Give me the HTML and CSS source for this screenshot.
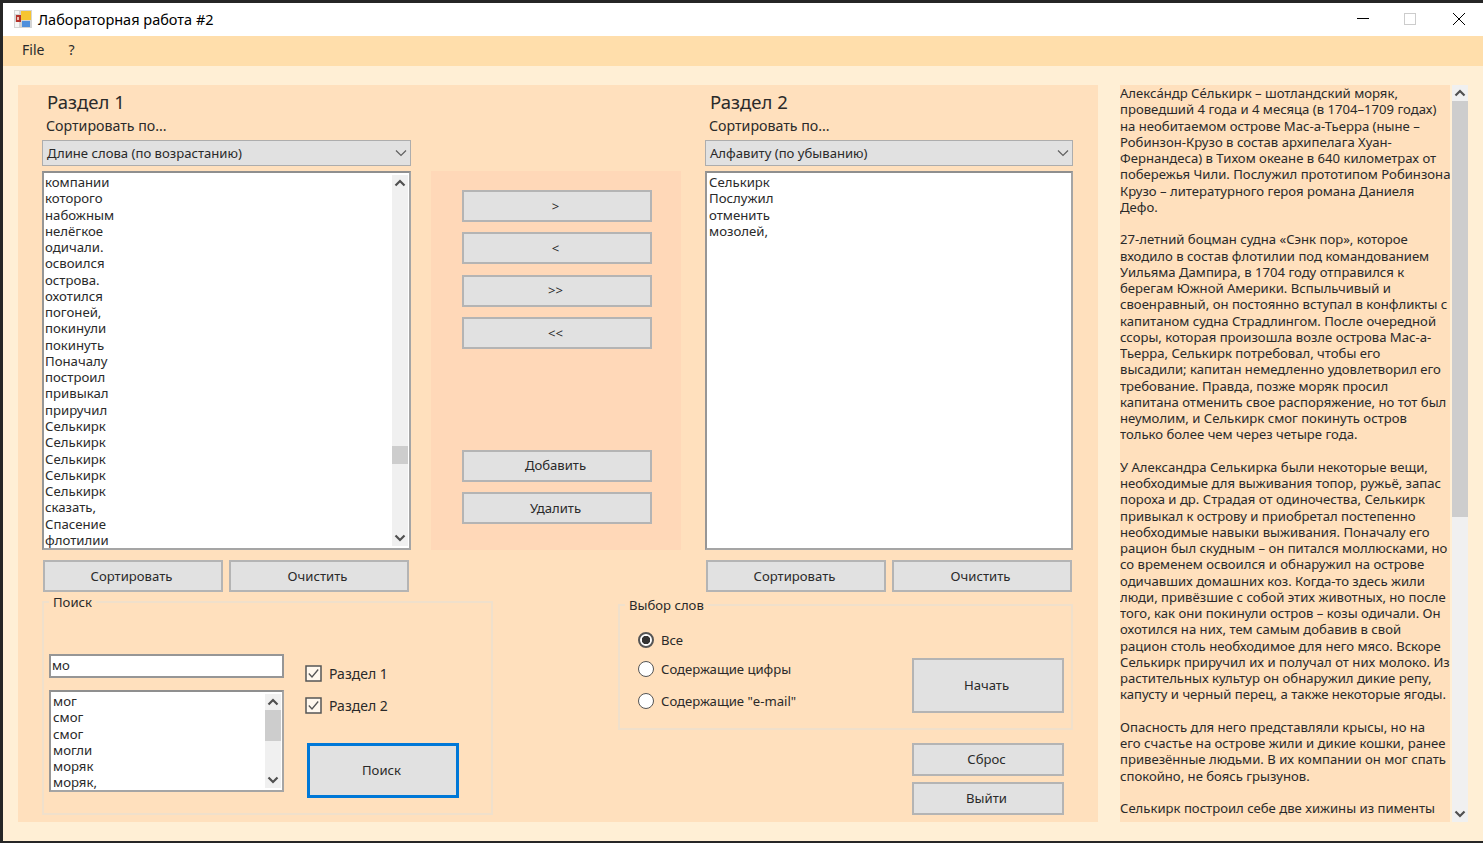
FILE: index.html
```html
<!DOCTYPE html>
<html lang="ru">
<head>
    <meta charset="UTF-8">
    <meta name="viewport" content="width=device-width, initial-scale=1.0">
    <title>Лабораторная работа #2</title>
    <link rel="stylesheet" href="styles.css">
</head>
<body>
    <svg class="sprites" width="0" height="0">
        <symbol id="chev-up" viewBox="0 0 12 8"><path d="M1.5 6.5 6 2l4.500 4.500" fill="none" stroke="#505050" stroke-width="2.200"/></symbol>
        <symbol id="chev-down" viewBox="0 0 12 8"><path d="M1.500 1.500 6 6l4.500-4.500" fill="none" stroke="#505050" stroke-width="2.200"/></symbol>
        <symbol id="combo-arrow" viewBox="0 0 12 8"><path d="M1 1.500 6 6.500l5-5" fill="none" stroke="#606060" stroke-width="1.200"/></symbol>
        <symbol id="check" viewBox="0 0 17 17"><rect x="1" y="1" width="15" height="15" fill="#fff8ee" stroke="#555" stroke-width="1.500"/><path d="M3.800 8.500 7 12l6.200-7.500" fill="none" stroke="#555" stroke-width="1.300"/></symbol>
    </svg>

    <div class="window">
        <div class="titlebar">
            <svg class="app-icon" width="18" height="18" viewBox="0 0 18 18">
                <rect width="18" height="18" fill="#d4d4d4"/>
                <rect x="1" y="12" width="4" height="5" fill="#f6f6f6"/>
                <rect x="1" y="1" width="4" height="3" fill="#f6f6f6"/>
                <rect x="2" y="5" width="5" height="7" fill="#b5332c"/>
                <rect x="3" y="7" width="2" height="3" fill="#ecc2b5"/>
                <rect x="7" y="1" width="10" height="9" fill="#f6c531"/>
                <rect x="8" y="11" width="8" height="6" fill="#4f8fdc"/>
            </svg>
            <span class="title-text">Лабораторная работа #2</span>
            <div class="win-controls">
                <svg width="12" height="12" viewBox="0 0 12 12"><path d="M0 5.500h12" stroke="#000" stroke-width="1"/></svg>
                <svg width="12" height="12" viewBox="0 0 12 12"><rect x=".5" y=".5" width="11" height="11" fill="none" stroke="#ccc"/></svg>
                <svg class="win-close" width="12" height="12" viewBox="0 0 12 12"><path d="M0 0l12 12M12 0 0 12" stroke="#000" stroke-width="1"/></svg>
            </div>
        </div>
        <div class="menubar">
            <span class="menu-item">File</span>
            <span class="menu-item">?</span>
        </div>

        <div class="content">
            <div class="panel">
                <div class="columns">
                    <div class="head">
                        <div class="section-title">Раздел 1</div>
                        <div class="sort-label">Сортировать по...</div>
                        <div class="combo"><span>Длине слова (по возрастанию)</span><svg width="12" height="8"><use href="#combo-arrow"/></svg></div>
                    </div>
                    <div></div>
                    <div class="head">
                        <div class="section-title">Раздел 2</div>
                        <div class="sort-label">Сортировать по...</div>
                        <div class="combo"><span>Алфавиту (по убыванию)</span><svg width="12" height="8"><use href="#combo-arrow"/></svg></div>
                    </div>

                    <div class="listbox">
                        <div class="items">
                            <div>компании</div>
                            <div>которого</div>
                            <div>набожным</div>
                            <div>нелёгкое</div>
                            <div>одичали.</div>
                            <div>освоился</div>
                            <div>острова.</div>
                            <div>охотился</div>
                            <div>погоней,</div>
                            <div>покинули</div>
                            <div>покинуть</div>
                            <div>Поначалу</div>
                            <div>построил</div>
                            <div>привыкал</div>
                            <div>приручил</div>
                            <div>Селькирк</div>
                            <div>Селькирк</div>
                            <div>Селькирк</div>
                            <div>Селькирк</div>
                            <div>Селькирк</div>
                            <div>сказать,</div>
                            <div>Спасение</div>
                            <div>флотилии</div>
                        </div>
                        <div class="scrollbar">
                            <svg class="sb-arrow" width="12" height="8"><use href="#chev-up"/></svg>
                            <div class="track"><div class="thumb thumb-list"></div></div>
                            <svg class="sb-arrow" width="12" height="8"><use href="#chev-down"/></svg>
                        </div>
                    </div>

                    <div class="transfer">
                        <div class="transfer-top">
                            <button class="btn">&gt;</button>
                            <button class="btn">&lt;</button>
                            <button class="btn">&gt;&gt;</button>
                            <button class="btn">&lt;&lt;</button>
                        </div>
                        <div class="transfer-bottom">
                            <button class="btn">Добавить</button>
                            <button class="btn">Удалить</button>
                        </div>
                    </div>

                    <div class="listbox">
                        <div class="items items-plain">
                            <div>Селькирк</div>
                            <div>Послужил</div>
                            <div>отменить</div>
                            <div>мозолей,</div>
                        </div>
                    </div>

                    <div class="btn-pair">
                        <button class="btn">Сортировать</button>
                        <button class="btn">Очистить</button>
                    </div>
                    <div></div>
                    <div class="btn-pair">
                        <button class="btn">Сортировать</button>
                        <button class="btn">Очистить</button>
                    </div>
                </div>

                <div class="bottom">
                    <fieldset class="group search-group">
                        <legend>Поиск</legend>
                        <div class="search-left">
                            <div class="textbox">мо</div>
                            <div class="listbox small-list">
                                <div class="items">
                                    <div>мог</div>
                                    <div>смог</div>
                                    <div>смог</div>
                                    <div>могли</div>
                                    <div>моряк</div>
                                    <div>моряк,</div>
                                </div>
                                <div class="scrollbar">
                                    <svg class="sb-arrow" width="12" height="8"><use href="#chev-up"/></svg>
                                    <div class="track"><div class="thumb thumb-small"></div></div>
                                    <svg class="sb-arrow" width="12" height="8"><use href="#chev-down"/></svg>
                                </div>
                            </div>
                        </div>
                        <div class="search-right">
                            <label class="check"><svg width="17" height="17"><use href="#check"/></svg>Раздел 1</label>
                            <label class="check"><svg width="17" height="17"><use href="#check"/></svg>Раздел 2</label>
                            <button class="btn btn-search">Поиск</button>
                        </div>
                    </fieldset>

                    <div class="bottom-right">
                        <fieldset class="group words-group">
                            <legend>Выбор слов</legend>
                            <div class="radios">
                                <div class="radio-row"><span class="radio radio-on"></span>Все</div>
                                <div class="radio-row row-2"><span class="radio"></span>Содержащие цифры</div>
                                <div class="radio-row row-3"><span class="radio"></span>Содержащие "e-mail"</div>
                            </div>
                            <button class="btn btn-start">Начать</button>
                        </fieldset>
                        <div class="actions">
                            <button class="btn">Сброс</button>
                            <button class="btn">Выйти</button>
                        </div>
                    </div>
                </div>
            </div>

            <div class="reader">
                <div class="reader-text">Алекса́ндр Се́лькирк – шотландский моряк,
проведший 4 года и 4 месяца (в 1704–1709 годах)
на необитаемом острове Мас-а-Тьерра (ныне –
Робинзон-Крузо в состав архипелага Хуан-
Фернандеса) в Тихом океане в 640 километрах от
побережья Чили. Послужил прототипом Робинзона
Крузо – литературного героя романа Даниеля
Дефо.

27-летний боцман судна «Сэнк пор», которое
входило в состав флотилии под командованием
Уильяма Дампира, в 1704 году отправился к
берегам Южной Америки. Вспыльчивый и
своенравный, он постоянно вступал в конфликты с
капитаном судна Страдлингом. После очередной
ссоры, которая произошла возле острова Мас-а-
Тьерра, Селькирк потребовал, чтобы его
высадили; капитан немедленно удовлетворил его
требование. Правда, позже моряк просил
капитана отменить свое распоряжение, но тот был
неумолим, и Селькирк смог покинуть остров
только более чем через четыре года.

У Александра Селькирка были некоторые вещи,
необходимые для выживания топор, ружьё, запас
пороха и др. Страдая от одиночества, Селькирк
привыкал к острову и приобретал постепенно
необходимые навыки выживания. Поначалу его
рацион был скудным – он питался моллюсками, но
со временем освоился и обнаружил на острове
одичавших домашних коз. Когда-то здесь жили
люди, привёзшие с собой этих животных, но после
того, как они покинули остров – козы одичали. Он
охотился на них, тем самым добавив в свой
рацион столь необходимое для него мясо. Вскоре
Селькирк приручил их и получал от них молоко. Из
растительных культур он обнаружил дикие репу,
капусту и черный перец, а также некоторые ягоды.

Опасность для него представляли крысы, но на
его счастье на острове жили и дикие кошки, ранее
привезённые людьми. В их компании он мог спать
спокойно, не боясь грызунов.

Селькирк построил себе две хижины из пименты</div>
                <div class="scrollbar reader-bar">
                    <svg class="sb-arrow" width="12" height="8"><use href="#chev-up"/></svg>
                    <div class="track"><div class="thumb thumb-reader"></div></div>
                    <svg class="sb-arrow" width="12" height="8"><use href="#chev-down"/></svg>
                </div>
            </div>
        </div>
    </div>
</body>
</html>
```

FILE: styles.css
```css
* {
    box-sizing: border-box;
}
html, body {
    margin: 0;
    padding: 0;
    height: 100%;
    overflow: hidden;
}
body {
    background-color: #262626;
    font-family: "Noto Sans", "Open Sans", sans-serif;
    font-size: 13.12px;
    color: #2a2a2a;
}
.sprites {
    display: block;
    height: 0;
}
.window {
    display: flex;
    flex-direction: column;
    height: 838px;
    margin: 3px 0 0 3px;
    background-color: #ffefd5;
}

/* title bar */
.titlebar {
    display: flex;
    align-items: center;
    height: 33px;
    padding: 0 0 2px 11px;
    background-color: #fff;
    color: #000;
}
.app-icon {
    margin-right: 6px;
}
.title-text {
    font-size: 14.5px;
}
.win-controls {
    display: flex;
    gap: 35px;
    margin-left: auto;
    padding-right: 18px;
}
.win-close {
    margin-left: 2px;
}
.menubar {
    display: flex;
    align-items: center;
    gap: 24px;
    height: 30px;
    padding: 0 0 3px 19px;
    background-color: #ffdeab;
    font-size: 14px;
}
.content {
    display: flex;
    gap: 22px;
    height: 737px;
    margin: 19px 0 0 15px;
}

/* main panel */
.panel {
    width: 1080px;
    padding-left: 24px;
    background-color: #ffe0bd;
}
.columns {
    display: grid;
    grid-template-columns: 369px 254px 368px;
    grid-template-rows: 86px 379px 42px;
    column-gap: 20px;
}
.head {
    display: flex;
    flex-direction: column;
    padding-top: 5px;
}
.section-title {
    height: 23px;
    margin-left: 5px;
    font-size: 18.5px;
    line-height: 23px;
}
.sort-label {
    height: 16px;
    margin: 5px 0 0 4px;
    font-size: 14.2px;
    line-height: 16px;
}
.combo {
    display: flex;
    align-items: center;
    justify-content: space-between;
    height: 26px;
    margin-top: 6px;
    padding: 0 3px 0 4px;
    background-color: #e1e1e1;
    border: 1px solid #adadad;
}
.listbox {
    display: flex;
    background-color: #fff;
    border: 2px solid #a5a5a5;
    border-top-color: #8f8f8f;
    border-left-color: #969696;
}
.items {
    flex: 1;
    padding: 1px 0 0 1px;
    font-size: 13.2px;
    line-height: 16.27px;
    overflow: hidden;
}
.items-plain {
    padding-left: 2px;
}
.scrollbar {
    display: flex;
    flex-direction: column;
    align-items: center;
    flex: none;
    width: 16px;
    margin: 2px 1px 2px 0;
    background-color: #f0f0f0;
}
.sb-arrow {
    flex: none;
    margin: 4px 0;
}
.track {
    flex: 1;
    width: 100%;
}
.thumb {
    width: 100%;
    background-color: #cdcdcd;
}
.thumb-list {
    height: 18px;
    margin-top: 255px;
}
.thumb-small {
    height: 31px;
}
.thumb-reader {
    height: 416px;
}
.transfer {
    display: flex;
    flex-direction: column;
    justify-content: space-between;
    margin-right: 4px;
    padding: 19px 29px 26px 31px;
    background-color: #ffd8b8;
}
.transfer-top, .transfer-bottom {
    display: flex;
    flex-direction: column;
    gap: 10.4px;
}
.transfer .btn {
    height: 32px;
}
.btn {
    padding: 0 3px 1px 0;
    background-color: #e1e1e1;
    border: 2px solid #b4b4b4;
    color: #2a2a2a;
    font: inherit;
}
.btn-pair {
    display: grid;
    grid-template-columns: 180px 180px;
    column-gap: 6px;
    padding: 10px 0 0 1px;
}
.btn-pair .btn {
    height: 32px;
}

/* bottom groups */
.bottom {
    display: flex;
    justify-content: space-between;
    width: 1031px;
}
.group {
    margin: 0;
    padding: 0;
    border: 2px solid #f0e0cb;
}
.group legend {
    padding: 0 4px;
    line-height: 20px;
}
.search-group {
    display: grid;
    grid-template-columns: 235px 1fr;
    column-gap: 21px;
    width: 451px;
    height: 223px;
    padding: 42px 0 0 5px;
}
.search-group legend {
    margin-left: 0;
}
.search-left {
    display: flex;
    flex-direction: column;
    gap: 12px;
}
.textbox {
    height: 24px;
    padding-left: 1px;
    background-color: #fff;
    border: 2px solid #969696;
    line-height: 19px;
}
.small-list {
    height: 102px;
}
.small-list .items {
    padding: 1px 0 0 2px;
}
.search-right {
    display: flex;
    flex-direction: column;
    padding-top: 11px;
}
.check {
    display: flex;
    align-items: center;
    gap: 7px;
    height: 17px;
    margin-bottom: 15px;
    font-size: 14px;
}
.btn-search {
    width: 152px;
    height: 55px;
    margin: 14px 0 0 2px;
    border: 3px solid #0078d7;
}
.bottom-right {
    display: flex;
    flex-direction: column;
    width: 455px;
    padding-top: 3px;
}
.words-group {
    display: flex;
    justify-content: space-between;
    height: 135px;
    padding-left: 18px;
}
.words-group legend {
    margin-left: -13px;
}
.radios {
    padding-top: 17px;
}
.radio-row {
    display: flex;
    align-items: center;
    gap: 7px;
    height: 16px;
}
.row-2 {
    margin-top: 13px;
}
.row-3 {
    margin-top: 16px;
}
.radio {
    width: 16px;
    height: 16px;
    background-color: #fff;
    border: 1.5px solid #555;
    border-radius: 50%;
}
.radio-on {
    border-width: 2px;
    background: radial-gradient(circle, #333 0 4px, #fff 4.500px);
}
.btn-start {
    width: 152px;
    height: 55px;
    margin: 43px 7px 0 0;
}
.actions {
    display: flex;
    flex-direction: column;
    gap: 6px;
    align-self: flex-end;
    width: 152px;
    margin: 13px 9px 0 0;
}
.actions .btn {
    height: 33px;
}

/* text on the right */
.reader {
    display: flex;
    gap: 2px;
}
.reader-text {
    width: 330px;
    background-color: #ffe0bd;
    line-height: 16.25px;
    white-space: pre;
    overflow: hidden;
}
.reader-bar {
    margin: 0;
}
```
